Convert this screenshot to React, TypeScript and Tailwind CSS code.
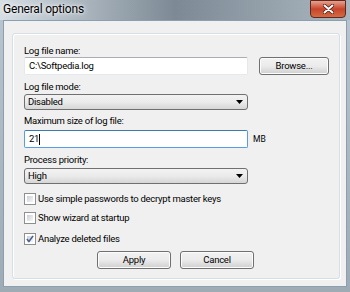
import React from "react";

const font = { fontFamily: 'Roboto, "Noto Sans", sans-serif' };
const txt = "text-[9.5px] tracking-[-0.25px] text-black";

function Label({ children }: { children: React.ReactNode }) {
  return <div className={"h-[14px] leading-[14px] " + txt}>{children}</div>;
}

function TextBox({ value, focused }: { value: string; focused?: boolean }) {
  return (
    <div
      className={
        "h-[18px] w-[224px] bg-white px-[4px] leading-[16px] border rounded-[2px] " +
        txt +
        " " +
        (focused ? "border-[#569de5] border-t-[#3d7bad]" : "border-[#e3e9ef] border-t-[#abadb3]")
      }
    >
      {value}
      {focused && <span className="inline-block w-px h-[11px] bg-black align-middle" />}
    </div>
  );
}

function Combo({ value }: { value: string }) {
  return (
    <div
      className={
        "h-[16px] w-[224px] flex items-center justify-between rounded-[3px] border border-[#707070] bg-gradient-to-b from-[#f2f2f2] via-[#ebebeb] to-[#d6d6d6] px-[3px] leading-[14px] " +
        txt
      }
    >
      <span>{value}</span>
      <svg width="7" height="4" viewBox="0 0 7 4" className="mr-[1px]">
        <path d="M0 0h7L3.5 4z" fill="#000" />
      </svg>
    </div>
  );
}

function Button({ children, w }: { children: React.ReactNode; w: string }) {
  return (
    <div
      className={
        "h-[18px] flex items-center justify-center rounded-[3px] border border-[#707070] bg-gradient-to-b from-[#f2f2f2] via-[#ebebeb] to-[#cfcfcf] shadow-[inset_0_0_0_1px_#fcfcfc] " +
        txt +
        " " +
        w
      }
    >
      {children}
    </div>
  );
}

function Check({ label, checked }: { label: string; checked?: boolean }) {
  return (
    <div className="flex items-center h-[12px]">
      <div className="w-[12px] h-[12px] border border-[#8e8f8f] bg-white p-[2px]">
        <div className="w-full h-full bg-gradient-to-br from-[#cbcfd5] to-[#f6f6f6] flex items-center justify-center">
          {checked && (
            <svg width="8" height="8" viewBox="0 0 9 9" className="-m-[1px]">
              <path d="M1 4.5l2.3 2.7L8 1" stroke="#4a5f97" strokeWidth="1.8" fill="none" />
            </svg>
          )}
        </div>
      </div>
      <span className={"ml-[2px] leading-[12px] " + txt}>{label}</span>
    </div>
  );
}

export default function App() {
  return (
    <div
      className="w-[350px] h-[292px] flex flex-col overflow-hidden bg-gradient-to-b from-[#b9c6d1] to-[#9eaab4]"
      style={font}
    >
      <div className="h-[20px] flex items-start justify-between bg-gradient-to-r from-[#d6dee5] via-[#7d8a95] to-[#aab6bf]">
        <span className="ml-[3px] mt-[1px] text-[12px] tracking-[-0.2px] leading-[16px] text-black [text-shadow:0_0_6px_#fff,0_0_3px_#fff]">
          General options
        </span>
        <div className="mr-[4px] w-[36px] h-[18px] rounded-b-[4px] border border-[#5a2a22] bg-gradient-to-b from-[#e8a08e] via-[#c7432a] to-[#d56a43] flex items-center justify-center">
          <svg width="11" height="10" viewBox="0 0 11 10">
            <path d="M1.5 1.5l8 7M9.5 1.5l-8 7" stroke="#3b1810" strokeWidth="3.4" strokeLinecap="round" />
            <path d="M1.5 1.5l8 7M9.5 1.5l-8 7" stroke="#fff" strokeWidth="2" strokeLinecap="round" />
          </svg>
        </div>
      </div>
      <div className="mx-[3px] h-[267px] bg-[#f0f0f0] border border-[#8aa0b0] pt-[12px] pl-[8px] pr-[6px]">
        <div className="h-[246px] rounded-[3px] border border-[#d5dfe5] shadow-[inset_1px_1px_0_#fff,1px_1px_0_#fff] pt-[10px] pl-[11px]">
          <Label>Log file name:</Label>
          <div className="mt-[-1px] flex items-center">
            <TextBox value="C:\Softpedia.log" />
            <div className="ml-[11px]">
              <Button w="w-[70px]">Browse...</Button>
            </div>
          </div>
          <div className="mt-[5px]">
            <Label>Log file mode:</Label>
          </div>
          <Combo value="Disabled" />
          <div className="mt-[4px]">
            <Label>Maximum size of log file:</Label>
          </div>
          <div className="mt-[2px] flex items-center">
            <TextBox value="21" focused />
            <span className="ml-[5px] text-[8.5px] text-black">MB</span>
          </div>
          <div className="mt-[5px]">
            <Label>Process priority:</Label>
          </div>
          <div className="mt-[1px]">
            <Combo value="High" />
          </div>
          <div className="mt-[9px]">
            <Check label="Use simple passwords to decrypt master keys" />
          </div>
          <div className="mt-[7px]">
            <Check label="Show wizard at startup" />
          </div>
          <div className="mt-[9px]">
            <Check label="Analyze deleted files" checked />
          </div>
          <div className="mt-[6px] flex gap-[9px] pl-[73px]">
            <Button w="w-[74px]">Apply</Button>
            <Button w="w-[74px]">Cancel</Button>
          </div>
        </div>
      </div>
    </div>
  );
}
